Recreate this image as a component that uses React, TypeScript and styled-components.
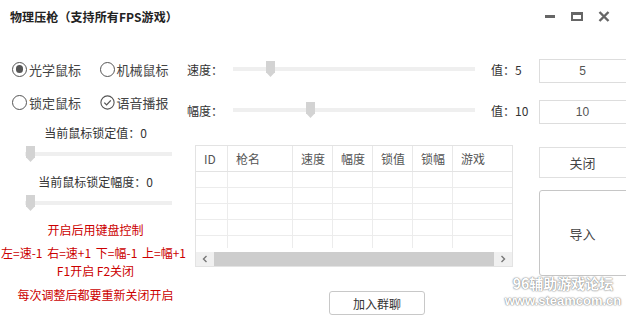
import React from "react";
import styled, { createGlobalStyle } from "styled-components";

const GlobalStyle = createGlobalStyle`
  html, body {
    margin: 0;
    padding: 0;
    background: #fff;
    overflow: hidden;
  }
  body {
    font-family: "Noto Sans CJK SC", "Noto Sans", sans-serif;
    font-size: 12px;
    color: #333;
  }
`;

const columns = ["ID", "枪名", "速度", "幅度", "锁值", "锁幅", "游戏"];

const App: React.FC = () => {
  return (
    <Window>
      <GlobalStyle />
      <TitleBar>
        <Title>物理压枪（支持所有FPS游戏）</Title>
        <Controls>
          <CtrlButton aria-label="minimize">
            <MinIcon />
          </CtrlButton>
          <CtrlButton aria-label="maximize">
            <MaxIcon />
          </CtrlButton>
          <CtrlButton aria-label="close">
            <svg width="12" height="11" viewBox="0 0 12 11">
              <path d="M1.5 1 L10.5 10 M10.5 1 L1.5 10" stroke="#666" strokeWidth="2.4" />
            </svg>
          </CtrlButton>
        </Controls>
      </TitleBar>

      <Body>
        {/* 左边 */}
        <LeftCol>
          <OptionRow>
            <Option>
              <RadioDot $checked />
              光学鼠标
            </Option>
            <Option>
              <RadioDot />
              机械鼠标
            </Option>
          </OptionRow>
          <OptionRow $mt={13}>
            <Option>
              <RadioDot />
              锁定鼠标
            </Option>
            <Option>
              <svg width="15" height="15" viewBox="0 0 15 15">
                <circle cx="7.5" cy="7.5" r="6.6" fill="none" stroke="#555" strokeWidth="1.1" />
                <path d="M4.3 7.6 L6.6 9.9 L10.8 5.4" fill="none" stroke="#555" strokeWidth="1.3" />
              </svg>
              语音播报
            </Option>
          </OptionRow>

          <LockLabel $mt={12}>当前鼠标锁定值：0</LockLabel>
          <LockSlider $mt={4}>
            <Track />
            <Thumb style={{ left: 1 }} />
          </LockSlider>
          <LockLabel $mt={11}>当前鼠标锁定幅度：0</LockLabel>
          <LockSlider $mt={4}>
            <Track />
            <Thumb style={{ left: 1 }} />
          </LockSlider>

          <Hint $mt={10}>开启后用键盘控制</Hint>
          <Hint $mt={5} $wide>左=速-1 右=速+1 下=幅-1 上=幅+1</Hint>
          <Hint $mt={0}>F1开启 F2关闭</Hint>
          <Hint $mt={6}>每次调整后都要重新关闭开启</Hint>
        </LeftCol>

        {/* 中间 */}
        <MiddleCol>
          <SliderRow>
            <RowLabel>速度：</RowLabel>
            <SliderBox>
              <Track />
              <Thumb style={{ left: 33 }} />
            </SliderBox>
            <ValueLabel>值：5</ValueLabel>
          </SliderRow>
          <SliderRow $mt={21}>
            <RowLabel>幅度：</RowLabel>
            <SliderBox>
              <Track />
              <Thumb style={{ left: 73 }} />
            </SliderBox>
            <ValueLabel>值：10</ValueLabel>
          </SliderRow>

          <Table>
            <HeadRow>
              {columns.map((c) => (
                <HeadCell key={c}>{c}</HeadCell>
              ))}
            </HeadRow>
            <RowsArea>
              {[0, 1, 2, 3, 4].map((r) => (
                <DataRow key={r}>
                  {columns.map((c) => (
                    <DataCell key={c} />
                  ))}
                </DataRow>
              ))}
            </RowsArea>
            <ScrollBar>
              <ScrollArrow>
                <svg width="6" height="8" viewBox="0 0 6 8">
                  <path d="M4.5 1 L1.5 4 L4.5 7" fill="none" stroke="#777" strokeWidth="1.4" />
                </svg>
              </ScrollArrow>
              <ScrollThumb />
              <ScrollArrow>
                <svg width="6" height="8" viewBox="0 0 6 8">
                  <path d="M1.5 1 L4.5 4 L1.5 7" fill="none" stroke="#777" strokeWidth="1.4" />
                </svg>
              </ScrollArrow>
            </ScrollBar>
          </Table>

          <JoinButton type="button">加入群聊</JoinButton>
        </MiddleCol>

        {/* 右边 */}
        <RightCol>
          <ValueInput defaultValue="5" />
          <ValueInput defaultValue="10" $mt={17} />
          <SideButton type="button" $h={31} $mt={23}>关闭</SideButton>
          <SideButton type="button" $h={86} $mt={12} $dark>导入</SideButton>
        </RightCol>
      </Body>

      <Watermark>
        <span className="cn">96辅助游戏论坛</span>
        <span className="url">www.steamcom.cn</span>
      </Watermark>
    </Window>
  );
};

export default App;

const Window = styled.div`
  position: relative;
  width: 626px;
  height: 322px;
  overflow: hidden;
  background: #fff;
`;

const TitleBar = styled.div`
  display: flex;
  align-items: center;
  justify-content: space-between;
  height: 32px;
  padding-left: 10px;
`;

const Title = styled.div`
  font-size: 12px;
  font-weight: bold;
  color: #222;
  letter-spacing: 0.1px;
`;

const Controls = styled.div`
  display: flex;
  align-items: center;
  gap: 1px;
  padding-right: 9px;
`;

const CtrlButton = styled.div`
  display: flex;
  align-items: center;
  justify-content: center;
  width: 26px;
  height: 20px;
`;

const MinIcon = styled.div`
  width: 10px;
  height: 3px;
  background: #666;
`;

const MaxIcon = styled.div`
  width: 8px;
  height: 4px;
  border: 2px solid #666;
  border-top-width: 3px;
`;

const Body = styled.div`
  display: flex;
  align-items: flex-start;
`;

// ---------- left ----------
const LeftCol = styled.div`
  display: flex;
  flex-direction: column;
  width: 187px;
  flex-shrink: 0;
  padding-top: 27px;
`;

const OptionRow = styled.div<{ $mt?: number }>`
  display: flex;
  align-items: center;
  height: 20px;
  padding-left: 12px;
  margin-top: ${(p) => p.$mt ?? 0}px;
`;

const Option = styled.label`
  display: flex;
  align-items: center;
  gap: 2px;
  width: 88px;
  font-size: 13px;
  color: #444;
`;

const RadioDot = styled.span<{ $checked?: boolean }>`
  position: relative;
  display: inline-block;
  box-sizing: border-box;
  width: 15px;
  height: 15px;
  border: 1.1px solid #555;
  border-radius: 50%;

  &::after {
    content: '';
    display: ${(p) => (p.$checked ? "block" : "none")};
    position: absolute;
    left: 2.5px;
    top: 2.5px;
    width: 7.5px;
    height: 7.5px;
    border-radius: 50%;
    background: #555;
  }
`;

const LockLabel = styled.div<{ $mt: number }>`
  height: 18px;
  line-height: 18px;
  margin-top: ${(p) => p.$mt}px;
  padding-left: 4px;
  text-align: center;
  font-size: 12px;
  color: #333;
`;

const SliderBox = styled.div`
  position: relative;
  flex: 1;
  height: 16px;
  display: flex;
  align-items: center;
`;

const LockSlider = styled(SliderBox)<{ $mt: number }>`
  flex: none;
  width: 147px;
  margin-left: 25px;
  margin-top: ${(p) => p.$mt}px;
`;

const Track = styled.div`
  width: 100%;
  height: 4px;
  background: #efefef;
`;

// 滑块:上方矩形,下方尖角
const Thumb = styled.div`
  position: absolute;
  top: 0;
  width: 9px;
  height: 16px;
  background: #d3d3d3;
  clip-path: polygon(0 0, 100% 0, 100% 70%, 50% 100%, 0 70%);
`;

const Hint = styled.div<{ $mt: number; $wide?: boolean }>`
  height: 18px;
  line-height: 18px;
  margin-top: ${(p) => p.$mt}px;
  text-align: center;
  white-space: nowrap;
  font-size: 12px;
  color: #c00;
  padding-left: ${(p) => (p.$wide ? 0 : 4)}px;
  word-spacing: ${(p) => (p.$wide ? "2px" : "0")};
`;

// ---------- middle ----------
const MiddleCol = styled.div`
  display: flex;
  flex-direction: column;
  width: 352px;
  flex-shrink: 0;
  padding-top: 27px;
`;

const SliderRow = styled.div<{ $mt?: number }>`
  display: flex;
  align-items: center;
  height: 20px;
  margin-top: ${(p) => p.$mt ?? 0}px;
`;

const RowLabel = styled.span`
  width: 46px;
  font-size: 12px;
  color: #333;
`;

const ValueLabel = styled.span`
  width: 48px;
  margin-left: 16px;
  font-size: 12px;
  color: #333;
`;

const Table = styled.div`
  display: flex;
  flex-direction: column;
  width: 316px;
  height: 120px;
  margin-top: 25px;
  margin-left: 8px;
  border: 1px solid #e3e3e3;
  overflow: hidden;
`;

const gridCols = "32px 65px 40px 40px 40px 40px 1fr";

const HeadRow = styled.div`
  display: grid;
  grid-template-columns: ${gridCols};
  height: 25px;
  border-bottom: 1px solid #e3e3e3;
`;

const HeadCell = styled.div`
  display: flex;
  align-items: center;
  padding-left: 8px;
  border-right: 1px solid #e8e8e8;
  font-size: 12px;
  color: #555;

  &:last-child {
    border-right: 0;
  }
`;

const RowsArea = styled.div`
  height: 76px;
  overflow: hidden;
`;

const DataRow = styled.div`
  display: grid;
  grid-template-columns: ${gridCols};
  height: 16px;
  border-bottom: 1px solid #ececec;
  box-sizing: border-box;
`;

const DataCell = styled.div`
  border-right: 1px solid #ececec;

  &:last-child {
    border-right: 0;
  }
`;

const ScrollBar = styled.div`
  display: flex;
  align-items: stretch;
  height: 14px;
  margin-top: 4px;
  background: #f0f0f0;
`;

const ScrollArrow = styled.div`
  display: flex;
  align-items: center;
  justify-content: center;
  width: 18px;
`;

const ScrollThumb = styled.div`
  flex: 1;
  background: #cdcdcd;
`;

const JoinButton = styled.button`
  width: 96px;
  height: 24px;
  margin-top: 24px;
  margin-left: 142px;
  padding: 0;
  border: 1px solid #c8c8c8;
  border-radius: 3px;
  background: #fff;
  font-family: inherit;
  font-size: 12px;
  color: #333;
`;

// ---------- right ----------
const RightCol = styled.div`
  display: flex;
  flex-direction: column;
  width: 90px;
  flex-shrink: 0;
  padding-top: 27px;
`;

const ValueInput = styled.input<{ $mt?: number }>`
  box-sizing: border-box;
  width: 92px;
  height: 24px;
  margin: ${(p) => p.$mt ?? 0}px 0 0;
  padding: 0 5px 0 0;
  border: 1px solid #ddd;
  outline: none;
  text-align: center;
  font-family: "Liberation Sans", sans-serif;
  font-size: 12px;
  color: #555;
`;

const SideButton = styled.button<{ $h: number; $mt: number; $dark?: boolean }>`
  box-sizing: border-box;
  width: 92px;
  height: ${(p) => p.$h}px;
  margin-top: ${(p) => p.$mt}px;
  padding: 0 5px 0 0;
  border: 1px solid ${(p) => (p.$dark ? "#c6c6c6" : "#e0e0e0")};
  border-radius: ${(p) => (p.$dark ? "3px" : "0")};
  background: #fff;
  font-family: inherit;
  font-size: 13px;
  color: #444;
`;

// 水印
const Watermark = styled.div`
  position: absolute;
  left: 506px;
  top: 276px;
  width: 114px;
  display: flex;
  flex-direction: column;
  align-items: center;
  line-height: 15px;
  font-weight: bold;
  color: #fff;
  text-shadow: 0 0 2px #888, 0 0 1px #666;

  .cn {
    font-size: 14px;
  }
  .url {
    font-family: "Liberation Sans", sans-serif;
    font-size: 13px;
    margin-top: 2px;
  }
`;
